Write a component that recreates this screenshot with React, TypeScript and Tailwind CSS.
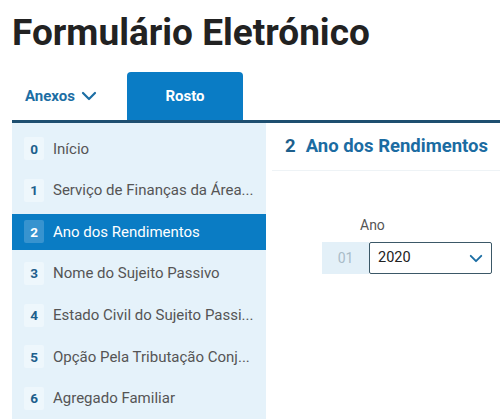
import React from 'react';

const items = [
    'Início',
    'Serviço de Finanças da Área...',
    'Ano dos Rendimentos',
    'Nome do Sujeito Passivo',
    'Estado Civil do Sujeito Passi...',
    'Opção Pela Tributação Conj...',
    'Agregado Familiar',
];

const Chevron = ({ className }: { className?: string }) => (
    <svg viewBox="0 0 16 10" className={className} fill="none" stroke="currentColor" strokeWidth={2.2} strokeLinecap="round" strokeLinejoin="round">
        <path d="M2 2l6 6 6-6" />
    </svg>
);

export default function App() {
    const selected = 2;

    return (
        <div className="w-[500px] h-[419px] overflow-hidden bg-white font-['Roboto',sans-serif]">
            <h1 className="pl-[12px] pt-[12px] text-[37px] leading-[41px] font-bold text-[#222]">
                Formulário Eletrónico
            </h1>

            {/* tabs */}
            <div className="mt-[19px] ml-[12px] flex items-end h-[51px] border-b-[3px] border-[#1e4f70]">
                <div className="w-[115px] h-full flex items-center pl-[13px] gap-[6px] text-[#1c6ea4] text-[15px] font-bold">
                    Anexos
                    <Chevron className="w-[16px] h-[10px]" />
                </div>
                <div className="w-[116px] h-full bg-[#0a7cc5] rounded-t-[4px] flex items-center justify-center text-white text-[15px] font-bold">
                    Rosto
                </div>
            </div>

            <div className="flex ml-[12px]">
                {/* sidebar */}
                <div className="w-[254px] h-[300px] bg-[#e5f2fa] pt-[5px]">
                    {items.map((label, i) => (
                        <div key={i} className="py-[3px]">
                            <div
                                className={
                                    i === selected
                                        ? 'h-[35.6px] flex items-center bg-[#0a7cc4] text-white'
                                        : 'h-[35.6px] flex items-center text-[#555]'
                                }
                            >
                                <span
                                    className={
                                        i === selected
                                            ? 'ml-[12px] w-[20px] h-[23px] flex items-center justify-center rounded-[2px] bg-[#3793cf] text-white text-[13.5px] font-bold'
                                            : 'ml-[12px] w-[20px] h-[23px] flex items-center justify-center rounded-[2px] bg-[#eef7fc] text-[#1d5f8c] text-[13.5px] font-bold'
                                    }
                                >
                                    {i}
                                </span>
                                <span className="ml-[9px] text-[15px] whitespace-nowrap">{label}</span>
                            </div>
                        </div>
                    ))}
                </div>

                {/* content */}
                <div className="flex-1">
                    <div className="ml-[6px] h-[48px] border-b border-[#eef3f6] flex items-center pl-[13px] gap-[10px] text-[#1b6ca2] text-[18.5px] font-bold">
                        <span className="text-[#1d5f8c]">2</span>
                        <span className="whitespace-nowrap">Ano dos Rendimentos</span>
                    </div>
                    <div className="pl-[94px] pt-[44px] text-[#555] text-[14px]">Ano</div>
                    <div className="mt-[6px] ml-[56px] flex h-[32px]">
                        <div className="w-[47px] bg-[#e3f0f8] flex items-center justify-center text-[#a9bcc8] text-[14px]">01</div>
                        <div className="w-[123px] border-[1.5px] border-[#3b5867] rounded-[2px] flex items-center justify-between pl-[8px] pr-[8px] text-[#222] text-[14.5px]">
                            2020
                            <Chevron className="w-[14px] h-[9px] text-[#1c6ea4]" />
                        </div>
                    </div>
                </div>
            </div>
        </div>
    );
}
